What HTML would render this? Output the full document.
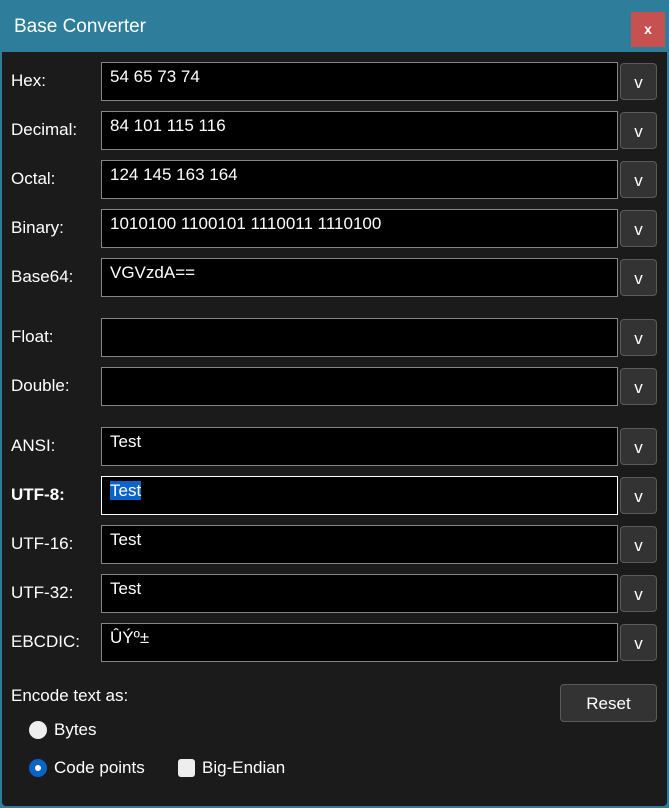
<!DOCTYPE html>
<html><head><style>
*{margin:0;padding:0;box-sizing:border-box}
body{width:669px;height:808px;background:#2e7d9a;font-family:"Liberation Sans",sans-serif;color:#fff;position:relative;overflow:hidden}
.title{position:absolute;left:14px;top:16px;font-size:19px}
.close{position:absolute;left:631px;top:12px;width:34px;height:35px;background:#c75050;font-size:14px;font-weight:bold;text-align:center;line-height:35px}
.body{position:absolute;left:2px;top:52px;width:665px;height:754px;background:#1b1b1b;border-radius:0 0 4px 4px}
.lbl{position:absolute;left:11px;font-size:17px}
.box{position:absolute;left:101px;width:517px;height:39px;background:#000;border:1px solid #858585;font-size:17px;padding:4px 0 0 8px}
.btn{position:absolute;left:620px;width:37px;height:37px;background:#333;border:1px solid #5a5a5a;border-radius:4px;text-align:center;line-height:38px;font-size:17px}
.sel{background:#0a64c8}
</style></head><body>
<div class="title">Base Converter</div>
<div class="close">x</div>
<div class="body"></div>

<div class="lbl" style="top:71px">Hex:</div><div class="box" style="top:62px">54 65 73 74</div><div class="btn" style="top:63px">v</div>
<div class="lbl" style="top:120px">Decimal:</div><div class="box" style="top:111px">84 101 115 116</div><div class="btn" style="top:112px">v</div>
<div class="lbl" style="top:169px">Octal:</div><div class="box" style="top:160px">124 145 163 164</div><div class="btn" style="top:161px">v</div>
<div class="lbl" style="top:218px">Binary:</div><div class="box" style="top:209px">1010100 1100101 1110011 1110100</div><div class="btn" style="top:210px">v</div>
<div class="lbl" style="top:267px">Base64:</div><div class="box" style="top:258px">VGVzdA==</div><div class="btn" style="top:259px">v</div>
<div class="lbl" style="top:327px">Float:</div><div class="box" style="top:318px"></div><div class="btn" style="top:319px">v</div>
<div class="lbl" style="top:376px">Double:</div><div class="box" style="top:367px"></div><div class="btn" style="top:368px">v</div>
<div class="lbl" style="top:436px">ANSI:</div><div class="box" style="top:427px">Test</div><div class="btn" style="top:428px">v</div>
<div class="lbl" style="top:485px;font-weight:bold">UTF-8:</div><div class="box" style="top:476px;border-color:#fff"><span class="sel">Test</span></div><div class="btn" style="top:477px">v</div>
<div class="lbl" style="top:534px">UTF-16:</div><div class="box" style="top:525px">Test</div><div class="btn" style="top:526px">v</div>
<div class="lbl" style="top:583px">UTF-32:</div><div class="box" style="top:574px">Test</div><div class="btn" style="top:575px">v</div>
<div class="lbl" style="top:632px">EBCDIC:</div><div class="box" style="top:623px">ÛÝº±</div><div class="btn" style="top:624px">v</div>

<div class="lbl" style="top:686px">Encode text as:</div>
<div style="position:absolute;left:560px;top:684px;width:97px;height:38px;background:#333;border:1px solid #5a5a5a;border-radius:4px;text-align:center;line-height:37px;font-size:17px">Reset</div>
<div style="position:absolute;left:29px;top:721px;width:18px;height:18px;border-radius:50%;background:#eee"></div>
<div class="lbl" style="left:54px;top:720px">Bytes</div>
<div style="position:absolute;left:29px;top:759px;width:18px;height:18px;border-radius:50%;background:#0a64c8"><div style="position:absolute;left:6px;top:6px;width:6px;height:6px;border-radius:50%;background:#fff"></div></div>
<div class="lbl" style="left:54px;top:758px">Code points</div>
<div style="position:absolute;left:178px;top:759px;width:17px;height:18px;border-radius:3px;background:#eee"></div>
<div class="lbl" style="left:202px;top:758px">Big-Endian</div>
</body></html>
